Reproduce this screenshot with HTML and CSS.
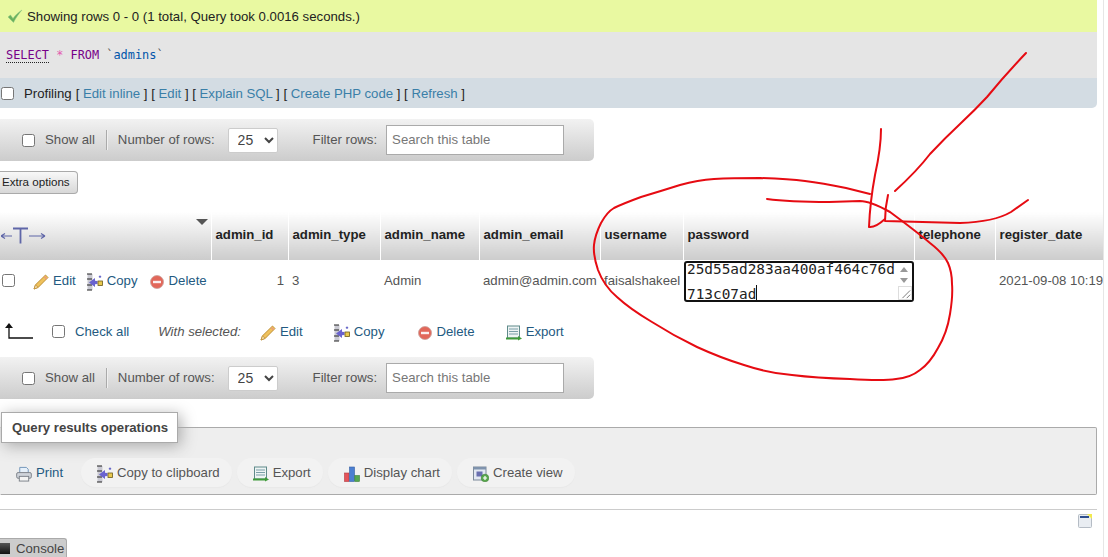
FILE: index.html
```html
<!DOCTYPE html>
<html lang="en">
<head>
<meta charset="utf-8">
<title>phpMyAdmin - admins</title>
<link rel="stylesheet" href="styles.css">
</head>
<body>
<svg class="defs" aria-hidden="true">
  <symbol id="i-pencil" viewBox="0 0 16 16">
    <path d="M12.500 1 15 3.500 5.200 13.400 1 15 2.500 10.800Z" fill="#efc15c" stroke="#b98a2e" stroke-width=".9"/>
    <path d="M2.500 10.800 5.200 13.400 1 15Z" fill="#f4dcae" stroke="#b98a2e" stroke-width=".7"/>
    <path d="M11.200 2.400 13.900 5.100" stroke="#e99a7a" stroke-width="1.400"/>
  </symbol>
  <symbol id="i-copy" viewBox="0 0 16 18">
    <rect x="0.500" y="1" width="5" height="16" fill="#c9c9d2"/>
    <path d="M0 1H5M0 6H5M0 12H5M0 17H5" stroke="#222" stroke-width="1"/>
    <path d="M2 9.500 8 5V7.800L10.500 8V11L8 11.200V14Z" fill="#6a63cf"/>
    <rect x="11" y="8" width="4.500" height="4.500" fill="#e8c94e" stroke="#6b5a1a" stroke-width=".8"/>
    <path d="M13 2.500V5M11.800 3.700H14.200" stroke="#5c5cc4" stroke-width="1"/>
  </symbol>
  <symbol id="i-delete" viewBox="0 0 14 14">
    <circle cx="7" cy="7" r="6.500" fill="#e2675a" stroke="#c9a09a" stroke-width=".8"/>
    <rect x="3" y="5.800" width="8" height="2.400" fill="#fbeeee"/>
  </symbol>
  <symbol id="i-export" viewBox="0 0 16 16">
    <rect x="1.500" y="1" width="12" height="12" fill="#eef4f4" stroke="#5f8a8a"/>
    <path d="M3 4H12M3 6.500H12M3 9H12" stroke="#7a9ea8" stroke-width="1"/>
    <path d="M0 12.500H12V11L16 13.500 12 15.500V14.500H0Z" fill="#3f9a3a"/>
  </symbol>
  <symbol id="i-print" viewBox="0 0 17 17">
    <path d="M4 7V1.500H11L13 3.500V7" fill="#e6f0fa" stroke="#6f93b8"/>
    <rect x="0.700" y="7" width="15.600" height="6" rx="1.500" fill="#cfd3da" stroke="#7b8088"/>
    <rect x="3.500" y="11" width="10" height="5" fill="#f3f3f3" stroke="#7b8088"/>
  </symbol>
  <symbol id="i-chart" viewBox="0 0 16 16">
    <rect x="0.500" y="7" width="4.500" height="8.500" fill="#e4545a" stroke="#b13a40" stroke-width=".6"/>
    <rect x="5.500" y="1" width="5" height="14.500" fill="#4c7fd1" stroke="#355ea3" stroke-width=".6"/>
    <rect x="10.800" y="9.500" width="4.700" height="6" fill="#55a84f" stroke="#3d7f39" stroke-width=".6"/>
  </symbol>
  <symbol id="i-view" viewBox="0 0 16 16">
    <rect x="0.500" y="1" width="12.500" height="13" fill="#e3e8f2" stroke="#7d8a99"/>
    <rect x="0.500" y="1" width="12.500" height="2.500" fill="#7f93ad"/>
    <rect x="3.500" y="5.500" width="6" height="5" fill="#6a6fb0"/>
    <circle cx="12" cy="12" r="3.800" fill="#59a94d" stroke="#3f7f38" stroke-width=".6"/>
    <path d="M10 12H14M12 10V14" stroke="#fff" stroke-width="1.200"/>
  </symbol>
  <symbol id="i-check" viewBox="0 0 16 14">
    <path d="M1 8 3.500 6 6 9.500C8.500 6 11 3.500 15 1 11.500 5 9 8.500 6.500 13.500Z" fill="#69b25c" stroke="#8fc486" stroke-width=".5"/>
  </symbol>
</svg>

<div class="page">
  <div class="success">
    <svg class="ico-check"><use href="#i-check"/></svg>
    <span>Showing rows 0 - 0 (1 total, Query took 0.0016 seconds.)</span>
  </div>
  <div class="sql"><code><span class="kw-select">SELECT</span> <span class="star">*</span> <span class="kw">FROM</span> <span class="tick">`</span><span class="tbl">admins</span><span class="tick">`</span></code></div>
  <div class="profiling">
    <input type="checkbox" class="cb"><span class="prof-label">Profiling</span>
    <span class="brk">[ <a>Edit inline</a> ] [ <a>Edit</a> ] [ <a>Explain SQL</a> ] [ <a>Create PHP code</a> ] [ <a>Refresh</a> ]</span>
  </div>

  <div class="nav nav-top">
    <input type="checkbox" class="cb">
    <span class="nav-show">Show all</span>
    <span class="nav-div"></span>
    <span class="nav-rows">Number of rows:</span>
    <select class="sel"><option>25</option></select>
    <span class="nav-filter">Filter rows:</span>
    <input class="search" type="text" placeholder="Search this table">
  </div>

  <button class="extra" type="button">Extra options</button>

  <div class="table-wrap">
    <table class="data">
      <colgroup>
        <col class="c0"><col class="c1"><col class="c2"><col class="c3"><col class="c4"><col class="c5"><col class="c6"><col class="c7"><col class="c8">
      </colgroup>
      <thead>
        <tr>
          <th class="th-tools">
            <span class="t-arrows"><svg class="t-svg" viewBox="0 0 46 22"><path d="M0 10H11M0 10 4 7.500M0 10 4 12.500" fill="none" stroke="#5f66a8" stroke-width="1.200"/><path d="M12 2.500H27M19.500 2.500V17.500" fill="none" stroke="#5f66a8" stroke-width="1.800"/><path d="M28 10H44M44 10 40 7.500M44 10 40 12.500" fill="none" stroke="#5f66a8" stroke-width="1.200"/></svg></span>
            <span class="tri"></span>
          </th>
          <th>admin_id</th><th>admin_type</th><th>admin_name</th><th>admin_email</th><th>username</th><th>password</th><th>telephone</th><th>register_date</th>
        </tr>
      </thead>
      <tbody>
        <tr>
          <td>
            <div class="acts">
              <input type="checkbox" class="cb">
              <a class="act a-edit"><svg class="ico"><use href="#i-pencil"/></svg>Edit</a>
              <a class="act a-copy"><svg class="ico ico-copy"><use href="#i-copy"/></svg>Copy</a>
              <a class="act a-del"><svg class="ico ico-del"><use href="#i-delete"/></svg>Delete</a>
            </div>
          </td>
          <td class="num">1</td>
          <td>3</td>
          <td>Admin</td>
          <td>admin@admin.com</td>
          <td>faisalshakeel</td>
          <td class="pw-cell">
            <div class="pw">
              <div class="pw-text">25d55ad283aa400af464c76d<br>713c07ad<span class="caret"></span></div>
              <div class="pw-bar"><span class="up"></span><span class="down"></span></div>
              <svg class="grip" viewBox="0 0 14 14"><path d="M13 4 4 13M13 9 9 13" stroke="#666" stroke-width="1"/></svg>
            </div>
          </td>
          <td></td>
          <td class="nowrap">2021-09-08 10:19:52</td>
        </tr>
      </tbody>
    </table>
  </div>

  <div class="bulk">
    <svg class="arrow-up" viewBox="0 0 30 20"><path d="M5 4V16H29" fill="none" stroke="#111" stroke-width="1.300"/><path d="M1 6 5 1 9 6Z" fill="#111"/></svg>
    <input type="checkbox" class="cb">
    <a class="check-all">Check all</a>
    <em class="with">With selected:</em>
    <a class="act b-edit"><svg class="ico"><use href="#i-pencil"/></svg>Edit</a>
    <a class="act b-copy"><svg class="ico ico-copy"><use href="#i-copy"/></svg>Copy</a>
    <a class="act b-del"><svg class="ico ico-del"><use href="#i-delete"/></svg>Delete</a>
    <a class="act b-exp"><svg class="ico"><use href="#i-export"/></svg>Export</a>
  </div>

  <div class="nav nav-bottom">
    <input type="checkbox" class="cb">
    <span class="nav-show">Show all</span>
    <span class="nav-div"></span>
    <span class="nav-rows">Number of rows:</span>
    <select class="sel"><option>25</option></select>
    <span class="nav-filter">Filter rows:</span>
    <input class="search" type="text" placeholder="Search this table">
  </div>

  <fieldset class="ops">
    <legend>Query results operations</legend>
    <div class="pills">
      <a class="pill p-print"><svg class="ico"><use href="#i-print"/></svg>Print</a>
      <a class="pill p-copy"><svg class="ico ico-copy"><use href="#i-copy"/></svg>Copy to clipboard</a>
      <a class="pill p-exp"><svg class="ico"><use href="#i-export"/></svg>Export</a>
      <a class="pill p-chart"><svg class="ico"><use href="#i-chart"/></svg>Display chart</a>
      <a class="pill p-view"><svg class="ico"><use href="#i-view"/></svg>Create view</a>
    </div>
  </fieldset>

  <div class="rule"></div>
  <div class="foot-icon">
    <svg class="bookmark" viewBox="0 0 14 14"><rect x="0.500" y="0.500" width="13" height="13" rx="1" fill="#e9edf2" stroke="#b5bcc5"/><rect x="2" y="2" width="9" height="2" fill="#2f4f8f"/><path d="M9 0H14V5Z" fill="#f2ea4e"/></svg>
  </div>
  <div class="console"><span class="con-ico"></span>Console</div>
</div>

<svg class="ink" viewBox="0 0 1108 557" aria-hidden="true">
  <path d="M1026 53 Q1005 75 987 97 Q975 110 960 124 Q945 138 930 154 Q917 171 895 191"/>
  <path d="M881 129 Q881 148 875 175 Q870 202 869 227 Q875 228 885 219"/>
  <path d="M888 195 Q885 208 885 221 Q917 222 960 223 Q994 222 1011 212 L1028 200"/>
  <path d="M767 199 Q789 202 829 202 L860 201 Q870 201 890 212 Q917 232 930 243 Q944 254 948 263 Q952 272 952 284 Q953 296 950 314 Q947 333 938 348 Q930 363 920 370 Q910 378 896 379 Q883 381 850 379 Q816 378 792 375 Q768 373 744 365 Q721 358 697 347 Q674 336 652 322 Q630 309 617 297 Q604 286 598 270 Q593 255 594 245 Q595 235 601 223 Q607 212 614 208 Q622 204 641 197 Q661 191 680 185 Q698 180 714 179 Q731 178 760 178 Q789 179 805 181 Q822 183 846 188 L870 194"/>
</svg>
</body>
</html>
```
FILE: styles.css
```css
* { box-sizing: border-box; }
html, body { margin: 0; padding: 0; height: 100%; overflow: hidden; background: #fff; }
body {
  font-family: "Liberation Sans", Arial, sans-serif;
  font-size: 13.200px;
  color: #444;
  position: relative;
}
.defs { position: absolute; width: 0; height: 0; overflow: hidden; }
.page {
  width: 1104px;
  height: 557px;
  overflow: hidden;
  border-right: 1px solid #e6e6e6;
  position: relative;
}
.page > .success, .page > .sql, .page > .profiling, .page > .ops, .page > .rule { width: 1097px; }
a { color: #235a81; }

.success {
  height: 32px;
  background: #e9f9a1;
  color: #222;
  display: flex;
  align-items: center;
  padding-left: 7px;
}
.ico-check { width: 16px; height: 14px; margin-right: 4px; flex: none; }
.sql {
  height: 46px;
  background: #e5e5e5;
  padding: 16px 0 0 6px;
  line-height: 14px;
}
.sql code { font-family: "DejaVu Sans Mono", monospace; font-size: 11.900px; }
.kw-select { color: #708; border-bottom: 1px dotted #222; }
.kw { color: #708; }
.star { color: #e35bb0; }
.tick { color: #555; }
.tbl { color: #05a; }
.profiling {
  height: 30px;
  background: #d3dce3;
  border-radius: 0 0 5px 0;
  display: flex;
  align-items: center;
  padding-left: 1px;
  color: #222;
}
.prof-label { margin-left: 10px; margin-right: 4px; }
.brk a { color: #3a7fa8; }
.cb {
  appearance: none;
  width: 13px;
  height: 13px;
  margin: 0;
  flex: none;
  background: #fff;
  border: 1px solid #767676;
  border-radius: 2.500px;
}

.nav {
  width: 594px;
  height: 42px;
  display: flex;
  align-items: center;
  padding-left: 22px;
  color: #555;
  background: linear-gradient(#f2f2f2, #cccccc);
  border-radius: 0 5px 5px 0;
}
.nav-top { margin-top: 11px; }
.nav-show { margin-left: 10px; margin-bottom: 2px; }
.nav-div { width: 1px; height: 20px; background: #aaa; margin-left: 11px; box-shadow: 1px 0 0 #f0f0f0; }
.nav-rows { margin-left: 11px; margin-bottom: 1px; }
.sel {
  width: 50px;
  height: 25px;
  margin-left: 13px;
  font-family: "Liberation Sans", sans-serif;
  font-size: 14px;
  color: #444;
  background: #fff;
  border: 1px solid #ccc;
  border-radius: 2px;
  padding-left: 5px;
}
.nav-filter { margin-left: 35px; margin-bottom: 2px; }
.search {
  width: 178px;
  height: 30px;
  margin-left: 9px;
  padding: 0 5px 2px;
  font-family: "Liberation Sans", sans-serif;
  font-size: 13.200px;
  background: #fff;
  border: 1px solid #aaa;
  color: #444;
}
.search::placeholder { color: #777; opacity: 1; }

.extra {
  display: block;
  height: 23px;
  width: 78px;
  margin: 10px 0 0 0;
  padding: 0 0 2px 2px;
  text-align: left;
  font-family: "Liberation Sans", sans-serif;
  font-size: 11.600px;
  color: #222;
  background: linear-gradient(#f8f8f8, #d8d8d8);
  border: 1px solid #aaa;
  border-radius: 0 4px 4px 0;
  border-left: 0;
}

.table-wrap { margin-top: 18px; width: 1104px; overflow: hidden; }
.data { border-collapse: collapse; table-layout: fixed; width: 1230px; }
.c0 { width: 211px; } .c1 { width: 77px; } .c2 { width: 92px; } .c3 { width: 99px; }
.c4 { width: 121px; } .c5 { width: 83px; } .c6 { width: 231px; } .c7 { width: 81px; } .c8 { width: 235px; }
.data th {
  height: 48px;
  padding: 0 0 4px 4px;
  text-align: left;
  font-size: 13.200px;
  font-weight: bold;
  color: #222;
  background: linear-gradient(#ffffff, #cccccc);
  border-right: 1px solid #fff;
  white-space: nowrap;
}
.th-tools { position: relative; }
.t-arrows { position: absolute; left: 1px; top: 14px; width: 46px; height: 22px; }
.t-svg { width: 46px; height: 22px; display: block; }
.tri {
  position: absolute;
  right: 3px;
  top: 7px;
  width: 0;
  height: 0;
  border-left: 6px solid transparent;
  border-right: 6px solid transparent;
  border-top: 6px solid #555;
}
.data td {
  height: 43px;
  padding: 0 0 2px 4px;
  vertical-align: middle;
  white-space: nowrap;
  overflow: hidden;
  color: #555;
}
.data td.num { text-align: right; padding-right: 4px; }
.data td.pw-cell { padding: 1px 0 0 0; vertical-align: top; }

.acts { display: flex; align-items: center; margin-left: -2px; }
.act { display: inline-flex; align-items: center; color: #235a81; white-space: nowrap; }
.ico { width: 16px; height: 16px; margin-right: 4px; margin-top: 2px; flex: none; }
.ico-copy { height: 18px; }
.ico-del { width: 14px; height: 14px; margin-right: 5px; }
.a-edit { margin-left: 18px; }
.a-copy { margin-left: 11px; }
.a-del { margin-left: 12px; }

.pw {
  position: relative;
  width: 230px;
  height: 41px;
  margin-left: 1px;
  background: #fff;
  border: 2px solid #111;
  border-radius: 3px;
  overflow: hidden;
}
.pw-text {
  font-family: "DejaVu Sans Mono", monospace;
  font-size: 14.400px;
  line-height: 25px;
  color: #222;
  padding-left: 1px;
  margin-top: -6px;
  white-space: nowrap;
}
.caret { display: inline-block; width: 1px; height: 17px; background: #111; vertical-align: -3px; }
.pw-bar { position: absolute; right: 1px; top: 0; width: 14px; height: 24px; }
.up, .down { position: absolute; left: 3px; width: 0; height: 0; border-left: 4px solid transparent; border-right: 4px solid transparent; }
.up { top: 4px; border-bottom: 5px solid #999; }
.down { top: 15px; border-top: 5px solid #999; }
.grip { position: absolute; right: 0; bottom: 0; width: 14px; height: 14px; background: #fff; border: 1px solid #ddd; }
.nowrap { white-space: nowrap; }

.bulk { height: 54px; display: flex; align-items: center; padding-top: 3px; }
.arrow-up { width: 30px; height: 20px; margin-left: 4px; flex: none; }
.bulk .cb { margin-left: 18px; }
.check-all { margin-left: 10px; color: #235a81; }
.with { margin-left: 29px; color: #555; }
.b-edit { margin-left: 19px; }
.b-copy { margin-left: 31px; }
.b-del { margin-left: 33px; }
.b-exp { margin-left: 31px; }

.ops {
  display: block;
  margin: 13px 0 0 0;
  padding: 0;
  height: 83px;
  background: #eee;
  border: 1px solid #aaa;
  border-left: 1px solid #eee;
  border-radius: 0 2px 2px 0;
  min-width: 0;
}
.ops legend {
  margin: 0;
  padding: 0 10px;
  width: 177px;
  height: 31px;
  line-height: 29px;
  background: #fff;
  border: 1px solid #aaa;
  font-weight: bold;
  white-space: nowrap;
  box-shadow: 3px 3px 15px #aaa;
  color: #444;
}
.pills { display: flex; margin-top: 15px; }
.pill {
  height: 29px;
  display: inline-flex;
  align-items: center;
  padding: 0 12px 0 16px;
  margin-right: 5px;
  border-radius: 15px;
  background: #f2f2f2;
  color: #555;
  white-space: nowrap;
  box-shadow: 0 1px 1px #e8e8e8;
}
.p-print { background: transparent; box-shadow: none; color: #235a81; padding: 0 0 0 15px; width: 80px; margin-right: 0; }
.rule { height: 1px; background: #ccc; margin-top: 14px; }
.foot-icon { height: 18px; display: flex; justify-content: flex-end; padding: 4px 12px 0 0; width: 1104px; }
.bookmark { width: 14px; height: 14px; }
.console {
  display: flex;
  align-items: center;
  width: 67px;
  height: 19px;
  margin-top: 10px;
  background: #ccc;
  border: 1px solid #aaa;
  border-left: 0;
  border-bottom: 0;
  border-radius: 0 3px 0 0;
  color: #444;
}
.con-ico { width: 10px; height: 11px; margin-right: 6px; background: linear-gradient(#555, #111); }

.ink {
  position: absolute;
  left: 0;
  top: 0;
  width: 1108px;
  height: 557px;
  pointer-events: none;
}
.ink path { fill: none; stroke: #e60b12; stroke-width: 2; stroke-linecap: round; stroke-linejoin: round; }
```
